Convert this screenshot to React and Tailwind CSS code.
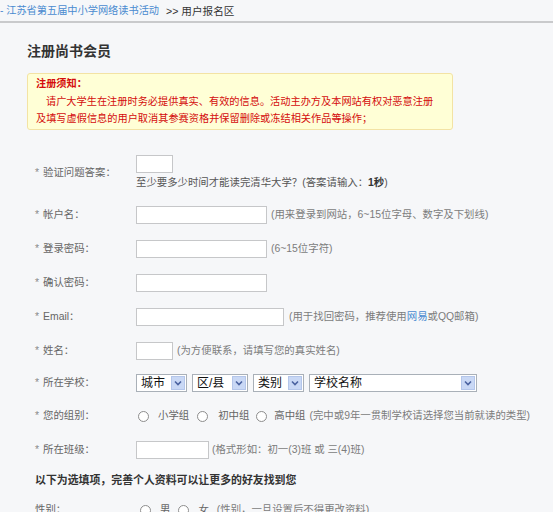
import React from "react";

function Star() {
  return <span className="text-[#888] mr-[4px]">*</span>;
}

function Label({ children, star = true }) {
  return (
    <div className="w-[136px] shrink-0 pl-[35px] flex items-center text-[#666]">
      {star ? <Star /> : null}
      <span>{children}</span>
    </div>
  );
}

function Input({ w }) {
  return <div className={`h-[18px] bg-white border border-[#c6c7c9] shrink-0 ${w}`}></div>;
}

function Hint({ children, ml }) {
  return <span className={`text-[#7c7c7c] whitespace-nowrap ${ml}`}>{children}</span>;
}

function Select({ w, text }) {
  return (
    <div className={`h-[18px] bg-white border border-[#a9b0b8] flex items-center justify-between shrink-0 ${w}`}>
      <span className="pl-[4px] text-[12px] text-[#111] leading-none">{text}</span>
      <span className="w-[14px] h-[14px] mr-[1px] bg-[#c9d8f5] border border-[#b4c6ea] flex items-center justify-center">
        <svg width="8" height="6" viewBox="0 0 8 6">
          <path d="M1 1.5 L4 4.5 L7 1.5" fill="none" stroke="#4a62a0" strokeWidth="1.6" />
        </svg>
      </span>
    </div>
  );
}

function Radio({ ml }) {
  return <span className={`w-[11px] h-[11px] rounded-full border border-[#8d8d8d] bg-white shrink-0 ${ml}`}></span>;
}

export default function App() {
  return (
    <div className="min-h-screen bg-[#f6f7f9] font-['Liberation_Sans','Noto_Sans_CJK_SC',sans-serif] text-[10.4px] leading-[14px]">
      <div className="h-[23px] border-b-2 border-[#c9cacc] flex items-center whitespace-nowrap">
        <span className="text-[#4a8bd0] text-[10.2px]">- 江苏省第五届中小学网络读书活动</span>
        <span className="text-[#333] text-[10.6px] ml-[7px]">&gt;&gt; 用户报名区</span>
      </div>

      <div className="pl-[27px] mt-[18px] h-[20px] flex items-center">
        <span className="text-[14px] font-bold text-[#333]">注册尚书会员</span>
      </div>

      <div className="ml-[27px] mt-[12px] w-[426px] h-[57px] bg-[#ffffd6] border border-[#f3e3a4] rounded-[3px] pl-[8px] pt-[1px] text-[#d40c0c] text-[10.2px] leading-[17.5px] whitespace-nowrap">
        <div className="font-bold">注册须知：</div>
        <div className="pl-[10px]">请广大学生在注册时务必提供真实、有效的信息。活动主办方及本网站有权对恶意注册</div>
        <div>及填写虚假信息的用户取消其参赛资格并保留删除或冻结相关作品等操作；</div>
      </div>

      <div className="mt-[25px] flex items-center">
        <Label>验证问题答案：</Label>
        <div className="flex flex-col">
          <Input w="w-[37px]" />
          <div className="mt-[3px] text-[#555] whitespace-nowrap">
            至少要多少时间才能读完清华大学？(答案请输入：<b className="text-[#333]">1秒</b>)
          </div>
        </div>
      </div>

      <div className="mt-[8px] h-[34px] flex items-center">
        <Label>帐户名：</Label>
        <Input w="w-[131px]" />
        <Hint ml="ml-[4px]">(用来登录到网站，6~15位字母、数字及下划线)</Hint>
      </div>

      <div className="h-[34px] flex items-center">
        <Label>登录密码：</Label>
        <Input w="w-[131px]" />
        <Hint ml="ml-[4px]">(6~15位字符)</Hint>
      </div>

      <div className="h-[34px] flex items-center">
        <Label>确认密码：</Label>
        <Input w="w-[131px]" />
      </div>

      <div className="h-[34px] flex items-center">
        <Label>Email：</Label>
        <Input w="w-[148px]" />
        <Hint ml="ml-[5px]">
          (用于找回密码，推荐使用<span className="text-[#4a8bd0]">网易</span>或QQ邮箱)
        </Hint>
      </div>

      <div className="h-[34px] flex items-center">
        <Label>姓名：</Label>
        <Input w="w-[37px]" />
        <Hint ml="ml-[4px]">(为方便联系，请填写您的真实姓名)</Hint>
      </div>

      <div className="h-[30px] flex items-center">
        <Label>所在学校：</Label>
        <div className="flex items-center gap-[5px]">
          <Select w="w-[51px]" text="城市" />
          <Select w="w-[56px]" text="区/县" />
          <Select w="w-[51px]" text="类别" />
          <Select w="w-[168px]" text="学校名称" />
        </div>
      </div>

      <div className="h-[36px] flex items-center">
        <Label>您的组别：</Label>
        <Radio ml="ml-[2px]" />
        <span className="ml-[9px] text-[#666]">小学组</span>
        <Radio ml="ml-[8px]" />
        <span className="ml-[10px] text-[#666]">初中组</span>
        <Radio ml="ml-[7px]" />
        <span className="ml-[7px] text-[#666]">高中组</span>
        <Hint ml="ml-[4px]">(完中或9年一贯制学校请选择您当前就读的类型)</Hint>
      </div>

      <div className="h-[31px] flex items-center">
        <Label>所在班级：</Label>
        <Input w="w-[73px]" />
        <Hint ml="ml-[3px]">(格式形如：初一(3)班 或 三(4)班)</Hint>
      </div>

      <div className="h-[30px] flex items-center pl-[35px]">
        <span className="font-bold text-[#333] text-[10.9px] whitespace-nowrap">以下为选填项，完善个人资料可以让更多的好友找到您</span>
      </div>

      <div className="h-[30px] flex items-center">
        <Label star={false}>性别：</Label>
        <Radio ml="ml-[4px]" />
        <span className="ml-[9px] text-[#666]">男</span>
        <Radio ml="ml-[8px]" />
        <span className="ml-[9px] text-[#666]">女</span>
        <Hint ml="ml-[8px]">(性别，一旦设置后不得更改资料)</Hint>
      </div>

      <div className="h-[40px]"></div>
    </div>
  );
}
